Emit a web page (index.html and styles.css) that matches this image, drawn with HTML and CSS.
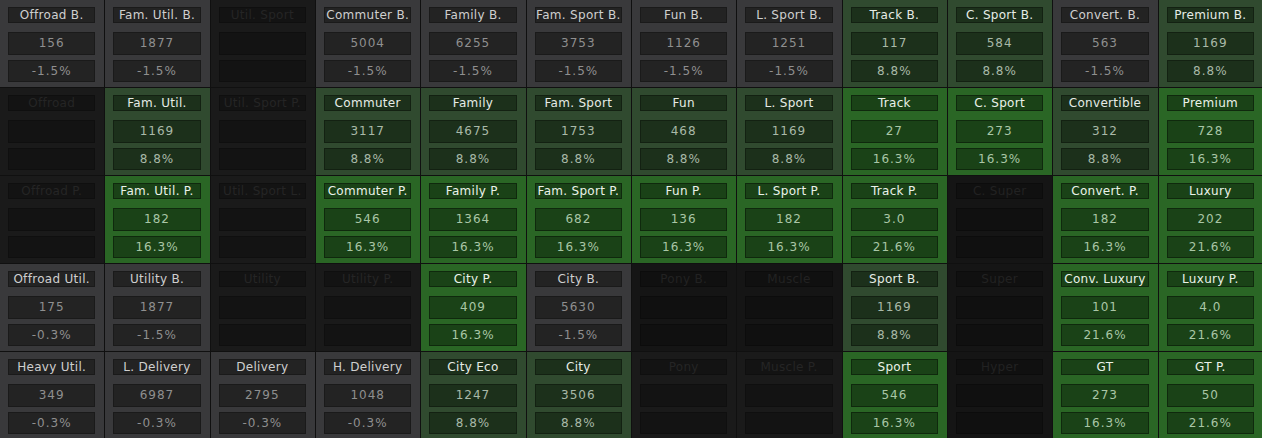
FILE: index.html
```html
<!DOCTYPE html>
<html>
<head>
<meta charset="utf-8">
<link rel="stylesheet" href="styles.css">
</head>
<body>
<div class="grid">
  <div class="cell g"><div class="lbl">Offroad B.</div><div class="box">156</div><div class="box">-1.5%</div></div>
  <div class="cell g"><div class="lbl">Fam. Util. B.</div><div class="box">1877</div><div class="box">-1.5%</div></div>
  <div class="cell x"><div class="lbl">Util. Sport</div><div class="box"></div><div class="box"></div></div>
  <div class="cell g"><div class="lbl">Commuter B.</div><div class="box">5004</div><div class="box">-1.5%</div></div>
  <div class="cell g"><div class="lbl">Family B.</div><div class="box">6255</div><div class="box">-1.5%</div></div>
  <div class="cell g"><div class="lbl">Fam. Sport B.</div><div class="box">3753</div><div class="box">-1.5%</div></div>
  <div class="cell g"><div class="lbl">Fun B.</div><div class="box">1126</div><div class="box">-1.5%</div></div>
  <div class="cell g"><div class="lbl">L. Sport B.</div><div class="box">1251</div><div class="box">-1.5%</div></div>
  <div class="cell d"><div class="lbl">Track B.</div><div class="box">117</div><div class="box">8.8%</div></div>
  <div class="cell d"><div class="lbl">C. Sport B.</div><div class="box">584</div><div class="box">8.8%</div></div>
  <div class="cell g"><div class="lbl">Convert. B.</div><div class="box">563</div><div class="box">-1.5%</div></div>
  <div class="cell d"><div class="lbl">Premium B.</div><div class="box">1169</div><div class="box">8.8%</div></div>

  <div class="cell x"><div class="lbl">Offroad</div><div class="box"></div><div class="box"></div></div>
  <div class="cell d"><div class="lbl">Fam. Util.</div><div class="box">1169</div><div class="box">8.8%</div></div>
  <div class="cell x"><div class="lbl">Util. Sport P.</div><div class="box"></div><div class="box"></div></div>
  <div class="cell d"><div class="lbl">Commuter</div><div class="box">3117</div><div class="box">8.8%</div></div>
  <div class="cell d"><div class="lbl">Family</div><div class="box">4675</div><div class="box">8.8%</div></div>
  <div class="cell d"><div class="lbl">Fam. Sport</div><div class="box">1753</div><div class="box">8.8%</div></div>
  <div class="cell d"><div class="lbl">Fun</div><div class="box">468</div><div class="box">8.8%</div></div>
  <div class="cell d"><div class="lbl">L. Sport</div><div class="box">1169</div><div class="box">8.8%</div></div>
  <div class="cell b"><div class="lbl">Track</div><div class="box">27</div><div class="box">16.3%</div></div>
  <div class="cell b"><div class="lbl">C. Sport</div><div class="box">273</div><div class="box">16.3%</div></div>
  <div class="cell d"><div class="lbl">Convertible</div><div class="box">312</div><div class="box">8.8%</div></div>
  <div class="cell b"><div class="lbl">Premium</div><div class="box">728</div><div class="box">16.3%</div></div>

  <div class="cell x"><div class="lbl">Offroad P.</div><div class="box"></div><div class="box"></div></div>
  <div class="cell b"><div class="lbl">Fam. Util. P.</div><div class="box">182</div><div class="box">16.3%</div></div>
  <div class="cell x"><div class="lbl">Util. Sport L.</div><div class="box"></div><div class="box"></div></div>
  <div class="cell b"><div class="lbl">Commuter P.</div><div class="box">546</div><div class="box">16.3%</div></div>
  <div class="cell b"><div class="lbl">Family P.</div><div class="box">1364</div><div class="box">16.3%</div></div>
  <div class="cell b"><div class="lbl">Fam. Sport P.</div><div class="box">682</div><div class="box">16.3%</div></div>
  <div class="cell b"><div class="lbl">Fun P.</div><div class="box">136</div><div class="box">16.3%</div></div>
  <div class="cell b"><div class="lbl">L. Sport P.</div><div class="box">182</div><div class="box">16.3%</div></div>
  <div class="cell b"><div class="lbl">Track P.</div><div class="box">3.0</div><div class="box">21.6%</div></div>
  <div class="cell x2"><div class="lbl">C. Super</div><div class="box"></div><div class="box"></div></div>
  <div class="cell b"><div class="lbl">Convert. P.</div><div class="box">182</div><div class="box">16.3%</div></div>
  <div class="cell b"><div class="lbl">Luxury</div><div class="box">202</div><div class="box">21.6%</div></div>

  <div class="cell g"><div class="lbl">Offroad Util.</div><div class="box">175</div><div class="box">-0.3%</div></div>
  <div class="cell g"><div class="lbl">Utility B.</div><div class="box">1877</div><div class="box">-1.5%</div></div>
  <div class="cell x"><div class="lbl">Utility</div><div class="box"></div><div class="box"></div></div>
  <div class="cell x"><div class="lbl">Utility P.</div><div class="box"></div><div class="box"></div></div>
  <div class="cell b"><div class="lbl">City P.</div><div class="box">409</div><div class="box">16.3%</div></div>
  <div class="cell g"><div class="lbl">City B.</div><div class="box">5630</div><div class="box">-1.5%</div></div>
  <div class="cell x2"><div class="lbl">Pony B.</div><div class="box"></div><div class="box"></div></div>
  <div class="cell x2"><div class="lbl">Muscle</div><div class="box"></div><div class="box"></div></div>
  <div class="cell d"><div class="lbl">Sport B.</div><div class="box">1169</div><div class="box">8.8%</div></div>
  <div class="cell x2"><div class="lbl">Super</div><div class="box"></div><div class="box"></div></div>
  <div class="cell b"><div class="lbl">Conv. Luxury</div><div class="box">101</div><div class="box">21.6%</div></div>
  <div class="cell b"><div class="lbl">Luxury P.</div><div class="box">4.0</div><div class="box">21.6%</div></div>

  <div class="cell g"><div class="lbl">Heavy Util.</div><div class="box">349</div><div class="box">-0.3%</div></div>
  <div class="cell g"><div class="lbl">L. Delivery</div><div class="box">6987</div><div class="box">-0.3%</div></div>
  <div class="cell g"><div class="lbl">Delivery</div><div class="box">2795</div><div class="box">-0.3%</div></div>
  <div class="cell g"><div class="lbl">H. Delivery</div><div class="box">1048</div><div class="box">-0.3%</div></div>
  <div class="cell d"><div class="lbl">City Eco</div><div class="box">1247</div><div class="box">8.8%</div></div>
  <div class="cell d"><div class="lbl">City</div><div class="box">3506</div><div class="box">8.8%</div></div>
  <div class="cell x"><div class="lbl">Pony</div><div class="box"></div><div class="box"></div></div>
  <div class="cell x"><div class="lbl">Muscle P.</div><div class="box"></div><div class="box"></div></div>
  <div class="cell b"><div class="lbl">Sport</div><div class="box">546</div><div class="box">16.3%</div></div>
  <div class="cell x2"><div class="lbl">Hyper</div><div class="box"></div><div class="box"></div></div>
  <div class="cell b"><div class="lbl">GT</div><div class="box">273</div><div class="box">16.3%</div></div>
  <div class="cell b"><div class="lbl">GT P.</div><div class="box">50</div><div class="box">21.6%</div></div>
</div>
</body>
</html>
```

FILE: styles.css
```css
html, body {
  margin: 0;
  padding: 0;
  background: #121212;
}
body {
  width: 1262px;
  height: 438px;
  overflow: hidden;
  font-family: "DejaVu Sans", Verdana, sans-serif;
}
.grid {
  display: grid;
  grid-template-columns: repeat(12, 1fr);
  grid-template-rows: repeat(5, 1fr);
  gap: 1px;
  width: 1263px;
  height: 439px;
  background: #101010;
}
.cell {
  display: flex;
  flex-direction: column;
  padding: 7px 9px 0 8px;
  box-sizing: border-box;
}
.lbl, .box {
  box-sizing: border-box;
  border: 1px solid;
  text-align: center;
  white-space: nowrap;
  overflow: visible;
}
.lbl {
  height: 16px;
  line-height: 14px;
  font-size: 12px;
  letter-spacing: 0.3px;
  margin-bottom: 9px;
}
.box {
  height: 23px;
  line-height: 21px;
  font-size: 12px;
  letter-spacing: 1px;
  margin-bottom: 5px;
}
.box + .box {
  height: 22px;
  line-height: 20px;
}

/* gray */
.g { background: #39393b; }
.g .lbl, .g .box { background: #232323; border-color: #1a1a1a; }
.g .lbl { color: #cfcfcf; }
.g .box { color: #8f8f8f; }

/* dark green */
.d { background: #304a2f; }
.d .lbl, .d .box { background: #1c301b; border-color: #132112; }
.d .lbl { color: #e6ece6; }
.d .box { color: #a9b9a8; }

/* bright green */
.b { background: #2a6625; }
.b .lbl, .b .box { background: #1a4217; border-color: #0f290d; }
.b .lbl { color: #eaf2e9; }
.b .box { color: #a9c6a6; }

/* disabled */
.x { background: #1a1a1a; }
.x .lbl, .x .box { background: #131313; border-color: #0f0f0f; color: #252525; }
.x2 { background: #151515; }
.x2 .lbl, .x2 .box { background: #101010; border-color: #0c0c0c; color: #222222; }
```
